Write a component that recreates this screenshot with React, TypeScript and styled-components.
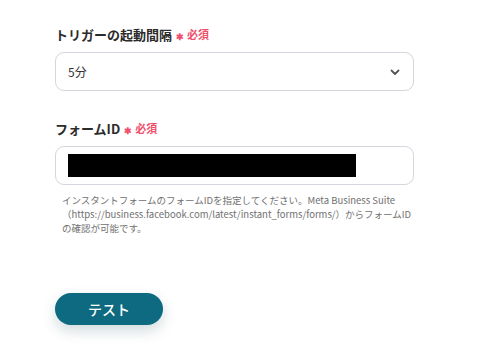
import styled, { createGlobalStyle } from 'styled-components';

const GlobalStyle = createGlobalStyle`
  body {
    margin: 0;
    background: #ffffff;
    font-family: "Noto Sans CJK JP", "Noto Sans", sans-serif;
  }
`;

const Page = styled.div`
  width: 488px;
  height: 349px;
  padding: 24px 74px 0 55px;
  box-sizing: border-box;
  display: flex;
  flex-direction: column;
`;

const Field = styled.div<{ gap: number }>`
  display: flex;
  flex-direction: column;
  margin-bottom: ${({ gap }) => gap}px;
`;

const Label = styled.div`
  display: flex;
  align-items: center;
  font-size: 13px;
  font-weight: 700;
  color: #2b2b2b;
  height: 20px;
  margin-bottom: 8px;
`;

const Required = styled.span`
  color: #f0506e;
  font-size: 11px;
  font-weight: 700;
  margin-left: 4px;
  display: inline-flex;
  align-items: center;

  &::before {
    content: '✱';
    font-size: 9px;
    margin-right: 3px;
    position: relative;
    top: 2px;
  }
`;

const Box = styled.div`
  height: 39px;
  border: 1px solid #d3d6dd;
  border-radius: 9px;
  box-sizing: border-box;
  display: flex;
  align-items: center;
  padding: 0 12px;
  justify-content: space-between;
`;

const Value = styled.span`
  font-size: 12px;
  color: #333;
`;

const Masked = styled.div`
  width: 288px;
  height: 23px;
  background: #000;
`;

const Help = styled.p`
  margin: 8px -3px 0 7px;
  font-size: 9.5px;
  line-height: 14px;
  color: #707070;
`;

const Button = styled.button`
  width: 108px;
  height: 32px;
  border: none;
  border-radius: 16px;
  background: #0d6a80;
  color: #fff;
  font-family: inherit;
  font-size: 14px;
  font-weight: 500;
  box-shadow: 0 6px 14px rgba(13, 60, 80, 0.18);
  cursor: pointer;
`;

const App = () => (
  <>
    <GlobalStyle />
    <Page>
      <Field gap={27}>
        <Label>
          トリガーの起動間隔<Required>必須</Required>
        </Label>
        <Box>
          <Value>5分</Value>
          <svg width="12" height="12" viewBox="0 0 12 12">
            <path d="M2.5 4.5 L6 8 L9.5 4.5" fill="none" stroke="#555" strokeWidth="1.8" strokeLinecap="round" strokeLinejoin="round" />
          </svg>
        </Box>
      </Field>
      <Field gap={58}>
        <Label>
          フォームID<Required>必須</Required>
        </Label>
        <Box>
          <Masked />
        </Box>
        <Help>
          インスタントフォームのフォームIDを指定してください。Meta Business Suite（https://business.facebook.com/latest/instant_forms/forms/）からフォームIDの確認が可能です。
        </Help>
      </Field>
      <div>
        <Button>テスト</Button>
      </div>
    </Page>
  </>
);

export default App;
